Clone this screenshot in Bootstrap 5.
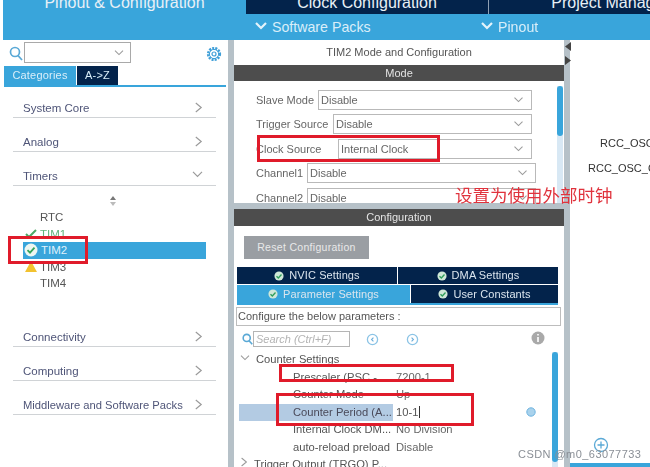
<!DOCTYPE html>
<html lang="en">
<head>
  <meta charset="UTF-8">
  <title>TIM2 Configuration</title>
  <link href="https://cdn.jsdelivr.net/npm/bootstrap@5.3.3/dist/css/bootstrap.min.css" rel="stylesheet">
  <style>
    html, body { height: 467px; overflow: hidden; background: #fff; }
    body { font-family: "Liberation Sans", Arial, sans-serif; color: #555; }
    .shot { width: 650px; height: 467px; position: relative; overflow: hidden; filter: blur(.35px); }

    .top-tabs { height: 14px; margin-left: 3px; background: #39a5db; overflow: hidden; }
    .top-tab { width: 243px; line-height: 6px; font-size: 16px; text-align: center; color: #e8f0f6; flex: none; }
    .top-tab.navy { background: #03234b; border-right: 1px solid #8fa0b3; }
    .top-sub { height: 26px; margin-left: 3px; background: #39a5db; color: #d9eef9; font-size: 14.2px; line-height: 26px; }
    .sub-a { margin-left: 252px; width: 226px; }
    .sub-a svg, .sub-b svg { margin-right: 5px; vertical-align: 1px; }

    .work { height: 427px; }
    .left-pane { width: 225px; margin-left: 3px; flex: none; }
    .gutter { width: 6px; background: #b6c1c8; flex: none; }
    .mid-pane { width: 330px; flex: none; }
    .right-pane { flex: 1; position: relative; font-size: 11px; color: #333; }

    .search-row { height: 25px; padding: 2px 5px 0 6px; }
    .fake-combo { width: 107px; height: 21px; border: 1px solid #a9a9a9; margin-left: 1px; padding-right: 6px; }
    .gear-ic { margin-left: auto; margin-right: 1px; }
    .cat-tabs { height: 21px; margin: 1px 2px 0 1px; border-bottom: 2px solid #39a5db; font-size: 11px; letter-spacing: .2px; }
    .cat-tab { height: 19px; line-height: 19px; text-align: center; color: #d9eef9; }
    .cat-one { width: 72px; background: #39a5db; margin-right: 1px; }
    .cat-two { width: 41px; background: #03234b; }

    .cat-list { padding: 0 12px 0 10px; margin-top: -3px; }
    .cat-item { height: 34px; padding: 16px 13px 0 10px; border-bottom: 1px solid #d0d3d6; font-size: 11.5px; line-height: 16px; color: #4f5578; }
    .cat-item svg { margin-top: 2px; }
    .cat-wide { font-size: 11.2px; }
    .cat-gap { height: 127px; position: relative; font-size: 11.5px; color: #555; }
    .sort-ic { position: absolute; left: 96px; top: 10px; }
    .tim { height: 16.5px; line-height: 16.5px; display: flex; align-items: center; }
    .tim-ic { position: absolute; }
    .tim-rows { position: absolute; left: 27px; top: 23px; width: 166px; }
    .tim.picked { background: #39a5db; color: #dff1fb; margin-left: -17px; padding-left: 18px; }
    .tim.green { color: #62b27b; }
    .tim-wrap { position: relative; }
    .ic-one { left: -15px; }
    .ic-two { left: 1px; }
    .ic-three { left: -15px; }

    .mid-title { height: 25px; line-height: 24px; text-align: center; font-size: 11px; color: #555; }
    .dark-bar { height: 16px; line-height: 16px; background: #4d4d4d; color: #e4e4e4; text-align: center; font-size: 11px; }
    .dark-bar.tall { height: 17px; line-height: 17px; }
    .mode-box { height: 122px; overflow: hidden; padding: 9px 0 0 22px; position: relative; }
    .mode-row { height: 20px; margin-bottom: 4.4px; font-size: 11px; line-height: 20px; color: #666; white-space: nowrap; }
    .mode-sel { height: 20px; border: 1px solid #b9b9b9; padding: 0 7px 0 2px; line-height: 18px; }
    .lab-a { width: 62px; }
    .lab-b { width: 77px; }
    .lab-c { width: 82px; }
    .lab-d { width: 51px; }
    .w-a { width: 214px; }
    .w-b { width: 199px; }
    .w-c { width: 194px; }
    .w-d { width: 229px; }
    .track { position: absolute; right: 1px; top: 5px; bottom: 0; width: 6px; background: #d8e8f4; }
    .thumb { position: absolute; left: 0; top: 0; width: 6px; height: 50px; border-radius: 3px; background: #39a5db; }
    .gap-band { height: 6px; background: #b6c1c8; }

    .conf-box { height: 241px; position: relative; overflow: hidden; }
    .reset-btn { width: 125px; height: 23px; margin: 10px 0 8px 10px; background: #9a9ea3; color: #e9e9e9; border: 0; border-radius: 0; font-size: 10.5px; padding: 0; letter-spacing: .3px; }
    .set-tabs { margin-left: 3px; width: 321px; font-size: 11px; letter-spacing: .1px; }
    .set-tab { height: 17px; background: #03234b; color: #dbe5ee; margin-bottom: 1px; }
    .set-tab svg { margin-right: 5px; }
    .set-a { width: 160px; margin-right: 1px; }
    .set-b { width: 160px; }
    .set-c { width: 173px; height: 18px; background: #39a5db; margin-right: 1px; margin-bottom: 0; }
    .set-d { width: 147px; height: 18px; margin-bottom: 0; }
    .set-line { height: 2px; background: #39a5db; width: 321px; margin-left: 3px; }
    .conf-hint { height: 19px; margin: 2px 3px 0 2px; border: 1px solid #bdbdbd; font-size: 11px; line-height: 17px; padding-left: 1px; color: #555; }
    .find-row { height: 16px; margin: 5px 0 0 8px; position: relative; }
    .find-in { width: 97px; height: 16px; border: 1px solid #b5b5b5; font-size: 11px; font-style: italic; color: #b3b3b3; line-height: 14px; padding-left: 2px; }
    .find-a { margin-left: 16px; transform: scaleX(-1); }
    .find-b { margin-left: 27px; }
    .find-c { position: absolute; left: 289px; top: 0; }

    .param-tree { position: relative; margin-top: 4px; font-size: 11.2px; }
    .p-row { height: 17.5px; line-height: 17.5px; white-space: nowrap; color: #555; display: flex; }
    .p-head { padding-left: 6px; }
    .p-head svg { margin-right: 6px; vertical-align: 1px; }
    .p-name { width: 154px; padding-left: 54px; flex: none; margin-left: 5px; overflow: hidden; }
    .p-val { padding-left: 3px; color: #666; }
    .p-row.now .p-name { background: #b3cbe3; color: #4a4a5a; }
    .p-row.now .p-val { color: #555; }
    .cursor { border-right: 1px solid #333; padding-right: 1px; }
    .dot-ic { position: absolute; left: 292px; top: 56px; }
    .track-two { position: absolute; left: 318px; top: 1px; height: 126px; width: 6px; background: #d8e8f4; }
    .track-two .thumb { height: 110px; }

    .rcc-a { position: absolute; left: 30px; top: 95px; }
    .rcc-b { position: absolute; left: 18px; top: 120px; }
    .plus-ic { position: absolute; left: 23px; top: 397px; }
    .bottom-bar { position: absolute; left: 0; right: 0; top: 423px; height: 4px; background: #39a5db; }
    .collapse-ic { position: absolute; left: 565px; top: 42px; }

    /* things drawn over the screenshot */
    .red-box { position: absolute; border: 3px solid #e01b2a; }
    .box-tim { left: 8px; top: 236px; width: 80px; height: 28px; }
    .box-clock { left: 257px; top: 135px; width: 183px; height: 27px; }
    .box-psc { left: 279px; top: 364px; width: 175px; height: 18px; }
    .box-arr { left: 276px; top: 393px; width: 198px; height: 33px; }
    .red-note { position: absolute; left: 455px; top: 183px; font-family: "Noto Sans CJK SC", "Liberation Sans", sans-serif; font-size: 17.5px; line-height: 24px; color: #e0333d; white-space: nowrap; }
    .watermark { position: absolute; left: 518px; top: 447px; font-size: 11px; line-height: 15px; letter-spacing: .45px; color: #8a8f96; white-space: nowrap; }
  </style>
</head>
<body>
  <svg width="0" height="0" class="position-absolute">
    <symbol id="chev-r" viewBox="0 0 10 12"><path d="M2 1l6 5-6 5" fill="none" stroke="#9a9a9a" stroke-width="1.3"/></symbol>
    <symbol id="chev-d" viewBox="0 0 12 10"><path d="M1 2l5 5 5-5" fill="none" stroke="#9a9a9a" stroke-width="1.3"/></symbol>
    <symbol id="chev-w" viewBox="0 0 12 10"><path d="M1 2l5 5 5-5" fill="none" stroke="#e4f3fb" stroke-width="2.2"/></symbol>
    <symbol id="ok-w" viewBox="0 0 12 12"><circle cx="6" cy="6" r="5.5" fill="#cfe8d8"/><path d="M3 6.2l2.2 2.2L9 4.2" fill="none" stroke="#2f9e5b" stroke-width="1.6"/></symbol>
    <symbol id="ring" viewBox="0 0 14 14"><circle cx="7" cy="7" r="5.5" fill="none" stroke="#8cc4e6" stroke-width="1.4"/><path d="M6 5l2 2-2 2" fill="none" stroke="#6aaedb" stroke-width="1.2"/></symbol>
  </svg>

  <div class="shot">
    <div class="top-tabs d-flex">
      <div class="top-tab">Pinout &amp; Configuration</div>
      <div class="top-tab navy">Clock Configuration</div>
      <div class="top-tab navy flex-grow-1">Project Manager</div>
    </div>
    <div class="top-sub d-flex">
      <div class="sub-a"><svg width="12" height="10"><use href="#chev-w"/></svg>Software Packs</div>
      <div class="sub-b"><svg width="12" height="10"><use href="#chev-w"/></svg>Pinout</div>
    </div>

    <div class="work d-flex">
      <div class="left-pane">
        <div class="search-row d-flex align-items-start">
          <svg width="14" height="16" viewBox="0 0 14 16" class="mt-1"><circle cx="6" cy="6" r="4.5" fill="none" stroke="#5aa9d6" stroke-width="1.7"/><path d="M9 9.5l4 4.5" stroke="#5aa9d6" stroke-width="1.8"/></svg>
          <div class="fake-combo d-flex align-items-center justify-content-end"><svg width="10" height="8"><use href="#chev-d"/></svg></div>
          <svg class="gear-ic mt-1" width="16" height="16" viewBox="0 0 16 16"><circle cx="8" cy="8" r="5.8" fill="none" stroke="#3f9fd8" stroke-width="2.6" stroke-dasharray="2 1.1"/><circle cx="8" cy="8" r="4.6" fill="none" stroke="#3f9fd8" stroke-width="1"/><circle cx="8" cy="8" r="2" fill="none" stroke="#3f9fd8" stroke-width="1.2"/></svg>
        </div>
        <div class="cat-tabs d-flex">
          <div class="cat-tab cat-one">Categories</div>
          <div class="cat-tab cat-two">A-&gt;Z</div>
        </div>
        <div class="cat-list">
          <div class="cat-item d-flex justify-content-between"><span>System Core</span><svg width="9" height="11"><use href="#chev-r"/></svg></div>
          <div class="cat-item d-flex justify-content-between"><span>Analog</span><svg width="9" height="11"><use href="#chev-r"/></svg></div>
          <div class="cat-item d-flex justify-content-between"><span>Timers</span><svg width="11" height="9"><use href="#chev-d"/></svg></div>
          <div class="cat-gap">
            <svg class="sort-ic" width="8" height="11" viewBox="0 0 8 11"><path d="M4 0l3 4H1z" fill="#777"/><path d="M4 10L1 6h6z" fill="#bbb"/></svg>
            <div class="tim-rows">
              <div class="tim">RTC</div>
              <div class="tim green tim-wrap"><svg class="tim-ic ic-one" width="12" height="10" viewBox="0 0 12 10"><path d="M1 5l3 3 7-7" fill="none" stroke="#4da866" stroke-width="2"/></svg>TIM1</div>
              <div class="tim picked tim-wrap"><svg class="tim-ic ic-two" width="14" height="14" viewBox="0 0 14 14"><circle cx="7" cy="7" r="6.5" fill="#eef6f1"/><path d="M3.5 7.2l2.5 2.5 4.5-5" fill="none" stroke="#35a35c" stroke-width="1.8"/></svg>TIM2</div>
              <div class="tim tim-wrap"><svg class="tim-ic ic-three" width="12" height="11" viewBox="0 0 13 12"><path d="M6.5 0L13 12H0z" fill="#f2c230"/></svg>TIM3</div>
              <div class="tim">TIM4</div>
            </div>
          </div>
          <div class="cat-item d-flex justify-content-between"><span>Connectivity</span><svg width="9" height="11"><use href="#chev-r"/></svg></div>
          <div class="cat-item d-flex justify-content-between"><span>Computing</span><svg width="9" height="11"><use href="#chev-r"/></svg></div>
          <div class="cat-item cat-wide d-flex justify-content-between"><span>Middleware and Software Packs</span><svg width="9" height="11"><use href="#chev-r"/></svg></div>
        </div>
      </div>

      <div class="gutter"></div>

      <div class="mid-pane">
        <div class="mid-title">TIM2 Mode and Configuration</div>
        <div class="dark-bar">Mode</div>
        <div class="mode-box">
          <div class="mode-row d-flex"><span class="lab-a">Slave Mode</span><div class="mode-sel w-a d-flex justify-content-between align-items-center"><span>Disable</span><svg width="11" height="8"><use href="#chev-d"/></svg></div></div>
          <div class="mode-row d-flex"><span class="lab-b">Trigger Source</span><div class="mode-sel w-b d-flex justify-content-between align-items-center"><span>Disable</span><svg width="11" height="8"><use href="#chev-d"/></svg></div></div>
          <div class="mode-row d-flex"><span class="lab-c">Clock Source</span><div class="mode-sel w-c d-flex justify-content-between align-items-center"><span>Internal Clock</span><svg width="11" height="8"><use href="#chev-d"/></svg></div></div>
          <div class="mode-row d-flex"><span class="lab-d">Channel1</span><div class="mode-sel w-d d-flex justify-content-between align-items-center"><span>Disable</span><svg width="11" height="8"><use href="#chev-d"/></svg></div></div>
          <div class="mode-row d-flex"><span class="lab-d">Channel2</span><div class="mode-sel w-d d-flex justify-content-between align-items-center"><span>Disable</span><svg width="11" height="8"><use href="#chev-d"/></svg></div></div>
          <div class="track"><div class="thumb"></div></div>
        </div>
        <div class="gap-band"></div>
        <div class="dark-bar tall">Configuration</div>
        <div class="conf-box">
          <button class="btn reset-btn d-block">Reset Configuration</button>
          <div class="set-tabs">
            <div class="d-flex">
              <div class="set-tab set-a d-flex align-items-center justify-content-center"><svg width="10" height="10"><use href="#ok-w"/></svg>NVIC Settings</div>
              <div class="set-tab set-b d-flex align-items-center justify-content-center"><svg width="10" height="10"><use href="#ok-w"/></svg>DMA Settings</div>
            </div>
            <div class="d-flex">
              <div class="set-tab set-c d-flex align-items-center justify-content-center"><svg width="10" height="10"><use href="#ok-w"/></svg>Parameter Settings</div>
              <div class="set-tab set-d d-flex align-items-center justify-content-center"><svg width="10" height="10"><use href="#ok-w"/></svg>User Constants</div>
            </div>
          </div>
          <div class="set-line"></div>
          <div class="conf-hint">Configure the below parameters :</div>
          <div class="find-row d-flex align-items-center">
            <svg width="11" height="13" viewBox="0 0 14 16"><circle cx="6" cy="6" r="4.5" fill="none" stroke="#5aa9d6" stroke-width="2"/><path d="M9 9.5l4 4.5" stroke="#5aa9d6" stroke-width="2"/></svg>
            <div class="find-in">Search (Ctrl+F)</div>
            <svg class="find-a" width="13" height="13"><use href="#ring"/></svg>
            <svg class="find-b" width="13" height="13"><use href="#ring"/></svg>
            <svg class="find-c" width="14" height="14" viewBox="0 0 14 14"><circle cx="7" cy="7" r="6.5" fill="#a9a9a9"/><path d="M7 6v5M7 3v1.6" stroke="#fff" stroke-width="1.6"/></svg>
          </div>
          <div class="param-tree">
            <div class="p-row p-head"><span><svg width="10" height="8"><use href="#chev-d"/></svg>Counter Settings</span></div>
            <div class="p-row"><span class="p-name">Prescaler (PSC - ...</span><span class="p-val">7200-1</span></div>
            <div class="p-row"><span class="p-name">Counter Mode</span><span class="p-val">Up</span></div>
            <div class="p-row now"><span class="p-name">Counter Period (A...</span><span class="p-val"><span class="cursor">10-1</span></span></div>
            <div class="p-row"><span class="p-name">Internal Clock DM...</span><span class="p-val">No Division</span></div>
            <div class="p-row"><span class="p-name">auto-reload preload</span><span class="p-val">Disable</span></div>
            <div class="p-row p-head"><span><svg width="8" height="10" viewBox="0 0 10 12"><use href="#chev-r"/></svg>Trigger Output (TRGO) P...</span></div>
            <svg class="dot-ic" width="10" height="10" viewBox="0 0 10 10"><circle cx="5" cy="5" r="4.2" fill="#a9d2ec" stroke="#6db3df"/></svg>
            <div class="track-two"><div class="thumb"></div></div>
          </div>
        </div>
      </div>

      <div class="gutter"></div>

      <div class="right-pane">
        <div class="rcc-a">RCC_OSC_IN</div>
        <div class="rcc-b">RCC_OSC_OUT</div>
        <svg class="plus-ic" width="16" height="16" viewBox="0 0 16 16"><circle cx="8" cy="8" r="6.5" fill="none" stroke="#5aa9d6" stroke-width="1.3"/><path d="M8 4.5v7M4.5 8h7" stroke="#5aa9d6" stroke-width="1.3"/></svg>
        <div class="bottom-bar"></div>
      </div>
    </div>

    <svg class="collapse-ic" width="6" height="24" viewBox="0 0 6 24"><path d="M6 0v9L0 4.5zM0 14v9l6-4.5z" fill="#444"/></svg>
    <div class="red-box box-tim"></div>
    <div class="red-box box-clock"></div>
    <div class="red-box box-psc"></div>
    <div class="red-box box-arr"></div>
    <div class="red-note">设置为使用外部时钟</div>
    <div class="watermark">CSDN @m0_63077733</div>
  </div>
  <script src="https://cdn.jsdelivr.net/npm/bootstrap@5.3.3/dist/js/bootstrap.bundle.min.js"></script>
</body>
</html>
